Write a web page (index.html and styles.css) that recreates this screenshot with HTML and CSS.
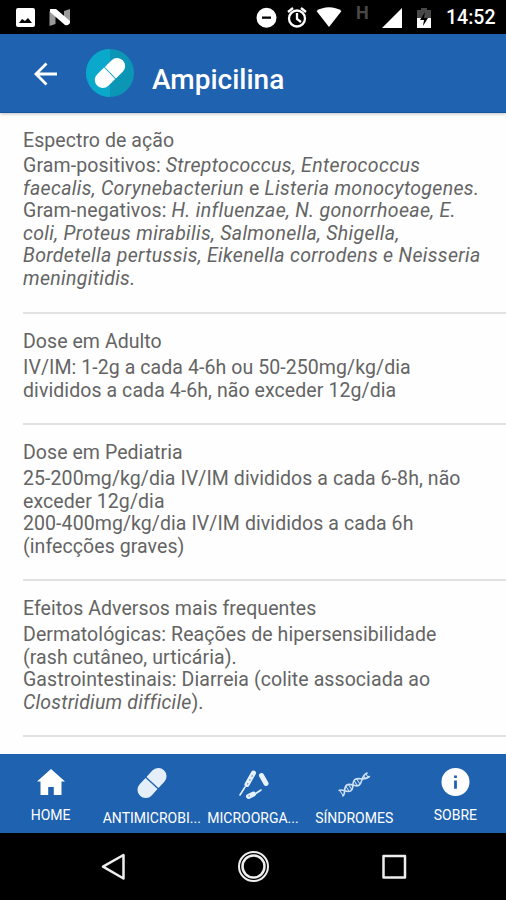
FILE: index.html
```html
<!DOCTYPE html>
<html lang="pt-BR">
<head>
<meta charset="utf-8">
<title>Ampicilina</title>
<link rel="stylesheet" href="styles.css">
</head>
<body>
<div class="status">
  <svg class="status-icons" width="506" height="34" viewBox="0 0 506 34" fill="#fff">
    <path fill-rule="evenodd" d="M18 8h15a2 2 0 0 1 2 2v15a2 2 0 0 1-2 2H18a2 2 0 0 1-2-2V10a2 2 0 0 1 2-2zM19 23h13l-4-5-3 3-3-2z"/>
    <path d="M49.500 11l6 5v8l-6 2zM64 11l6-2v15l-6-4z" fill="#999"/><path d="M50 9h6l14 12c0 3-2 5-5 4L50 12z"/>
    <circle cx="266.500" cy="17.700" r="10"/><path d="M262 16.500h9v2.300h-9z" fill="#000"/>
    <g fill="none" stroke="#fff" stroke-width="2.300"><circle cx="297" cy="18.500" r="8"/><path d="M288 12l5-4M306 12l-5-4M297 13v6l4 3"/></g>
    <path d="M316.500 11c7-5 18-5 25 0L329 27z"/>
    <path d="M402 8v20h-20z"/>
    <path d="M421 8h6v2h4v8h-14v-8h4z" fill="#484848"/><path d="M417 18h14v10h-14z"/><path d="M425 12l-5 8h4l-1 6 5-8h-4z" fill="#000"/>
  </svg>
  <span class="network">H</span>
  <span class="clock">14:52</span>
</div>
<header class="toolbar">
  <svg class="back" width="24" height="24" viewBox="0 0 24 24" fill="none" stroke="#fff" stroke-width="2.800"><path d="M23 12H3M12.500 1.500L2 12l10.500 10.500"/></svg>
  <svg class="avatar" width="48" height="50" viewBox="0 0 48 50"><circle cx="24" cy="25" r="24" fill="#0a96b4"/><path d="M24 1a24 24 0 0 0 0 48z" fill="#0aa8cb"/><g transform="rotate(-44 24 25)" fill="#fff"><path d="M23.500 17v16H14a8 8 0 0 1 0-16zM24.500 17H34a8 8 0 0 1 0 16h-9.500z"/></g></svg>
  <h1>Ampicilina</h1>
</header>
<main>
  <section>
    <h2>Espectro de ação</h2>
    <p>Gram-positivos: <i>Streptococcus, Enterococcus</i><br><i>faecalis, Corynebacteriun</i> e <i>Listeria monocytogenes.</i><br>Gram-negativos: <i>H. influenzae, N. gonorrhoeae, E.</i><br><i>coli, Proteus mirabilis, Salmonella, Shigella,</i><br><i>Bordetella pertussis, Eikenella corrodens e Neisseria</i><br><i>meningitidis.</i></p>
  </section>
  <section>
    <h2>Dose em Adulto</h2>
    <p>IV/IM: 1-2g a cada 4-6h ou 50-250mg/kg/dia<br>divididos a cada 4-6h, não exceder 12g/dia</p>
  </section>
  <section>
    <h2>Dose em Pediatria</h2>
    <p>25-200mg/kg/dia IV/IM divididos a cada 6-8h, não<br>exceder 12g/dia<br>200-400mg/kg/dia IV/IM divididos a cada 6h<br>(infecções graves)</p>
  </section>
  <section>
    <h2>Efeitos Adversos mais frequentes</h2>
    <p>Dermatológicas: Reações de hipersensibilidade<br>(rash cutâneo, urticária).<br>Gastrointestinais: Diarreia (colite associada ao<br><i class="tight">Clostridium difficile</i>).</p>
  </section>
</main>
<nav class="tabs">
  <a class="tab"><svg width="34" height="34" viewBox="0 0 34 34" fill="#fff"><path d="M17 4l14 12.500h-3.500V30h-7.700v-8h-5.600v8H6.500V16.500H3z"/></svg><span>HOME</span></a>
  <a class="tab low"><svg width="34" height="34" viewBox="0 0 34 34"><g transform="rotate(-47 17 18)" fill="#e5effa"><path d="M16.300 9.800v16.400H7.700a8.200 8.200 0 0 1 0-16.400zM17.700 9.800h8.600a8.200 8.200 0 0 1 0 16.400h-8.600z"/></g></svg><span>ANTIMICROBI...</span></a>
  <a class="tab low"><svg width="34" height="34" viewBox="0 0 34 34" fill="none" stroke="#e6f1fb" stroke-linecap="round"><path d="M11 19.500L17.500 8M25.500 10.500l4.500 8M12.500 31.500l5-2.500" stroke-width="5"/><path d="M4 30l5-8M19 29l6-4" stroke-width="1.600"/><path d="M11.500 19L17 9.500M13 31l4-2" stroke="#5f93cc" stroke-width="1.300" stroke-dasharray=".5 4"/></svg><span>MICROORGA...</span></a>
  <a class="tab low"><svg width="34" height="34" viewBox="0 0 34 34" fill="none" stroke="#cfe1f4" stroke-width="1.600"><g transform="translate(3.500 28.500) rotate(-34)"><path d="M0-3.500C5-3.500 5 3.500 10 3.500S15-3.500 20-3.500 26 3.500 34 2"/><path d="M0 3.500C5 3.500 5-3.500 10-3.500S15 3.500 20 3.500 26-3.500 34-2"/><path d="M1-3.500v7M8.500-3v6M11.500-3v6M18.500-3v6M21.500-3v6M29-2v4M32-2v4" stroke-width="1"/></g></svg><span>SÍNDROMES</span></a>
  <a class="tab"><svg width="34" height="34" viewBox="0 0 34 34" fill="#fff"><path fill-rule="evenodd" d="M17.500 3a14 14 0 1 0 0 28 14 14 0 0 0 0-28zM16.100 10.500h2.800v2.600h-2.800zM16.100 15.500h2.800v8.200h-2.800z"/></svg><span>SOBRE</span></a>
</nav>
<div class="system">
  <svg width="506" height="67" viewBox="0 0 506 67" fill="none" stroke="#eee" stroke-width="2.500"><path d="M123.500 22v23.500L103 33.700z" stroke-linejoin="round"/><circle cx="253.500" cy="33.500" r="14.500" stroke-width="2"/><circle cx="253.500" cy="33.500" r="11"/><rect x="383.500" y="23" width="21.500" height="21.500" stroke-linejoin="round"/></svg>
</div>
</body>
</html>
```
FILE: styles.css
```css
* { box-sizing: border-box; }
body { margin: 0; width: 506px; height: 900px; overflow: hidden; display: flex; flex-direction: column; background: #fefefe; font-family: Roboto, "Liberation Sans", sans-serif; }
svg { display: block; flex: none; overflow: visible; }
.status { position: relative; height: 34px; background: #000; color: #fff; flex: none; }
.network { position: absolute; left: 356px; top: 3px; font-size: 18px; line-height: 20px; font-weight: 700; color: #484848; }
.clock { position: absolute; left: 446px; top: 6px; font-size: 19.500px; line-height: 24px; font-weight: 500; }
.toolbar { height: 79px; flex: none; display: flex; align-items: center; background: #1f62b0; color: #fff; border-bottom: 1px solid #1454a0; box-shadow: 0 1px 3px rgba(0, 0, 0, .25); }
.back { margin: 1px 0 0 34px; }
.avatar { margin-left: 28px; }
h1 { margin: 13px 0 0 18px; font-size: 28px; line-height: 32px; font-weight: 500; }
main { flex: 1; min-height: 0; padding-left: 23px; overflow: hidden; color: #646464; }
section { border-bottom: 2px solid #e2e2e2; padding: 16px 0 21px; }
h2 { margin: 0 0 3px; font-size: 19.500px; line-height: 23px; font-weight: 400; letter-spacing: .06px; }
p { margin: 0; padding-top: 1px; font-size: 19.500px; line-height: 22.500px; white-space: nowrap; letter-spacing: .08px; }
section:first-child p { padding: 0 0 1px; letter-spacing: .13px; }
section i { letter-spacing: .34px; }
section .tight { letter-spacing: .22px; }
.tabs { flex: none; height: 79px; display: grid; grid-template-columns: repeat(5, 1fr); background: #1f62b0; color: #fff; }
.tab { display: flex; flex-direction: column; align-items: center; padding-top: 11px; font-size: 14px; line-height: 17px; }
.tab span { margin-top: 8px; }
.tab.low span { margin-top: 11px; }
.system { flex: none; height: 67px; background: #000; }
```
